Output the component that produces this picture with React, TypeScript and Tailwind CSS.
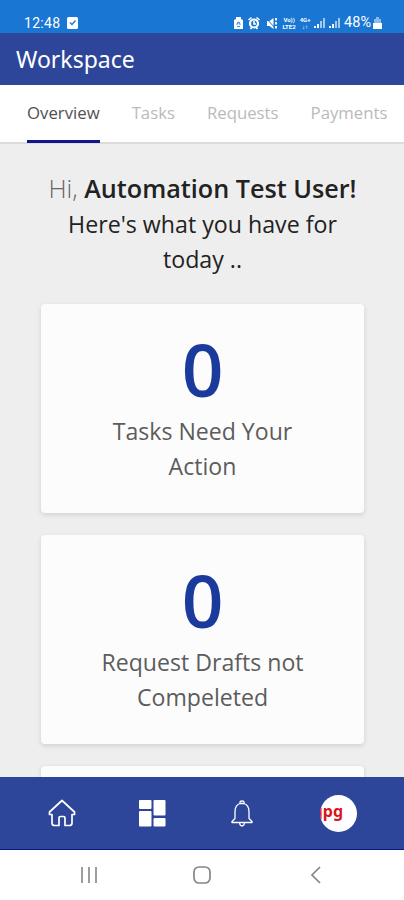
import React from 'react';

const tabs = ['Overview', 'Tasks', 'Requests', 'Payments'];

const cards = [
  { count: 0, lines: ['Tasks Need Your', 'Action'] },
  { count: 0, lines: ['Request Drafts not', 'Compeleted'] },
];

const StatusBar = () => (
  <div className="flex h-[33px] shrink-0 items-end justify-between bg-[#1976d2] pr-[22px] pb-[2px] pl-6 font-['Roboto',sans-serif] text-white">
    <div className="flex items-center gap-[7px]">
      <span className="text-[14px] leading-[16px] tracking-[0.3px]">12:48</span>
      <svg className="h-[12px] w-[11px]" viewBox="0 0 11 12" fill="none">
        <rect width="11" height="12" rx="1.5" fill="white" />
        <path d="M3 5.5l2 2 3.5-4" stroke="#1976d2" strokeWidth="1.3" />
      </svg>
    </div>
    <div className="flex items-center">
      {/* battery saver, alarm and mute */}
      <svg className="h-[14px] w-[46px]" viewBox="0 0 46 14" fill="none">
        <path d="M0 4l2-1V1h5v2l2 1v9H0z" fill="white" />
        <path d="M3 9c0-4 3-4 3 0M3 7h3M3 10.5h3" stroke="#1976d2" strokeWidth="0.8" />
        <circle cx="20" cy="7.500" r="4" stroke="white" strokeWidth="2.200" />
        <path d="M14.500 4l3-2.500M25.500 4l-3-2.500M16.500 13l1.500-2M23.500 13l-1.500-2M20 5v3h2" stroke="white" strokeWidth="1.600" />
        <path d="M33 5h2.500l4-3v11l-4-3H33z" fill="white" />
        <path d="M32 2l9 10" stroke="#1976d2" strokeWidth="1" />
        <path d="M42 2v2.500M42 6v2.500M42 10v2.500" stroke="white" strokeWidth="1.800" />
      </svg>
      <div className="ml-px flex w-[16px] flex-col items-center text-[6px] leading-[7px] font-bold">
        <span>Vo))</span>
        <span>LTE2</span>
      </div>
      <div className="ml-[2px] flex w-[12px] flex-col items-center text-[6px] leading-[7px] font-bold">
        <span>4G+</span>
        <span>↓↑</span>
      </div>
      <svg className="ml-[3px] h-[12px] w-[26px]" viewBox="0 0 26 12" fill="white">
        <path d="M0 9h2v2H0zM3 7h2v4H3zM15 9h2v2h-2zM18 7h2v4h-2z" />
        <path d="M6 4h2v7H6zM9 1h2v10H9zM21 4h2v7h-2zM24 1h2v10h-2z" opacity="0.6" />
      </svg>
      <span className="ml-[4px] text-[14.500px] leading-[16px]">48%</span>
      <svg className="ml-[2px] h-[12px] w-[9px]" viewBox="0 0 9 12" fill="white">
        <path d="M1 2h2V0h3v2h2v4H1z" opacity="0.5" />
        <path d="M0 6h9v6H0z" />
      </svg>
    </div>
  </div>
);

const HomeIcon = () => (
  <svg className="h-7 w-7" viewBox="0 0 28 28" fill="none" stroke="white" strokeWidth="1.700" strokeLinejoin="round">
    <path d="M14 1.500L1.500 13v2.500H4V24q0 2.500 2.500 2.500H11V19q0-1.500 1.500-1.500h3q1.500 0 1.500 1.500v7.500h4.500Q24 26.500 24 24v-8.500h2.500V13z" />
  </svg>
);

const DashboardIcon = () => (
  <svg className="h-[27px] w-[27px]" viewBox="0 0 27 27" fill="white">
    <rect x="0" y="0" width="12.500" height="9" rx="1" />
    <rect x="0" y="11" width="12.500" height="15.500" rx="1" />
    <rect x="14.500" y="0" width="12" height="15.500" rx="1" />
    <rect x="14.500" y="18" width="12" height="8.500" rx="1" />
  </svg>
);

const BellIcon = () => (
  <svg className="h-[27px] w-[22px]" viewBox="0 0 22 27" fill="none" stroke="white" strokeWidth="1.300" strokeLinejoin="round">
    <path d="M1 22.500v-1l3-3V12q0-7 5-8.500h4q5 1.500 5 8.500v6.500l3 3v1z" />
    <path d="M9 3.500V2q0-1 2-1t2 1v1.500M8.500 23q.5 3 2.500 3t2.500-3" />
  </svg>
);

const App = () => {
  return (
    <div className="flex h-[900px] w-[404px] flex-col overflow-hidden bg-[#eeeeee] font-['Open_Sans',sans-serif]">
      <StatusBar />

      <header className="flex h-[52px] shrink-0 items-center bg-[#2e469a] pl-4">
        <h1 className="font-['Noto_Sans',sans-serif] text-[23px] leading-none text-white">Workspace</h1>
      </header>

      <nav className="flex h-[59px] shrink-0 gap-[32px] border-b-2 border-[#dcdcdc] bg-white pl-[27px] text-[16.750px]">
        {tabs.map((tab, index) => (
          <button
            key={tab}
            className={`h-[58px] shrink-0 border-b-3 ${
              index === 0 ? 'border-[#16168c] text-[#505050]' : 'border-transparent text-[#bababa]'
            }`}
          >
            {tab}
          </button>
        ))}
      </nav>

      <main className="flex min-h-0 flex-1 flex-col overflow-hidden pr-[40px] pl-[41px]">
        <div className="mt-[27px] shrink-0 text-center text-[23.200px] leading-[35.500px] whitespace-nowrap text-[#222]">
          <p className="text-[25.200px]">
            <span className="font-light text-[#666]">Hi,</span> <b className="font-semibold">Automation Test User!</b>
          </p>
          <p>Here's what you have for</p>
          <p>today ..</p>
        </div>

        <div className="mt-[26px] flex flex-col gap-[22px]">
          {cards.map((card) => (
            <section
              key={card.lines[0]}
              className="flex h-[209px] shrink-0 flex-col items-center rounded-[4px] bg-[#fcfcfc] pt-[25px] text-center shadow-[0_2px_5px_rgba(0,0,0,0.12)]"
            >
              <div className="text-[73px] leading-[80px] font-semibold text-[#1b3b9c]">{card.count}</div>
              <div className="mt-[5px] text-[23.100px] leading-[35px] whitespace-nowrap text-[#5c5c5c]">
                {card.lines.map((line) => (
                  <p key={line}>{line}</p>
                ))}
              </div>
            </section>
          ))}
          <section className="h-[209px] shrink-0 rounded-[4px] bg-[#fcfcfc] shadow-[0_1px_4px_rgba(0,0,0,0.14)]" />
        </div>
      </main>

      <nav className="flex h-[73px] shrink-0 items-center border-y border-t-[#2846a0] border-b-[#0c1680] bg-[#2e469a] pb-px pl-[47.500px]">
        <button aria-label="Home">
          <HomeIcon />
        </button>
        <button className="ml-[63.500px]" aria-label="Dashboard">
          <DashboardIcon />
        </button>
        <button className="ml-[65px]" aria-label="Notifications">
          <BellIcon />
        </button>
        <button className="ml-[67px]" aria-label="Profile">
          <span className="flex h-[37px] w-[37px] items-center overflow-hidden rounded-full bg-white pb-[5px]">
            <span className="-ml-[2px] font-['Noto_Sans',sans-serif] text-[16px] leading-[20px] font-bold text-[#d9141c]">jpg</span>
          </span>
        </button>
      </nav>

      <div className="flex h-[50px] shrink-0 items-center justify-between bg-white pr-[83px] pl-[80px] text-[#858585]">
        <svg className="h-[18px] w-[18px]" viewBox="0 0 18 18" stroke="currentColor" strokeWidth="1.600">
          <path d="M2 1v16M9 1v16M16 1v16" />
        </svg>
        <svg className="-ml-[4px] h-[18px] w-[18px]" viewBox="0 0 18 18" fill="none" stroke="currentColor" strokeWidth="1.700">
          <rect x="1" y="1" width="16" height="16" rx="5" />
        </svg>
        <svg className="h-[18px] w-[11px]" viewBox="0 0 11 18" fill="none" stroke="currentColor" strokeWidth="1.700">
          <path d="M10 1L2 9l8 8" />
        </svg>
      </div>
    </div>
  );
};

export default App;
